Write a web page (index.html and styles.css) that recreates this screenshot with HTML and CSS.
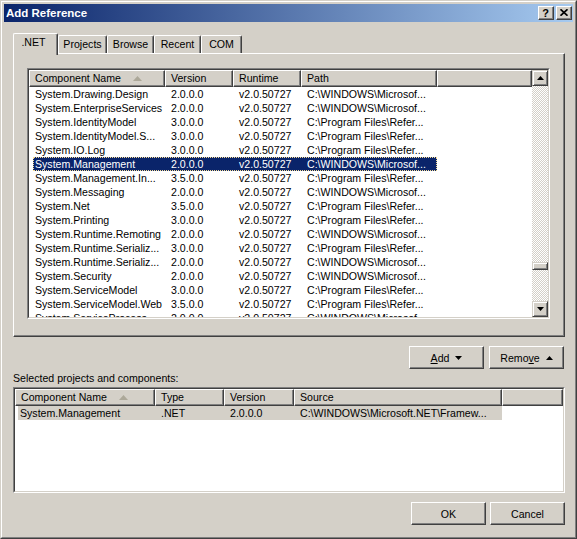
FILE: index.html
```html
<!DOCTYPE html>
<html lang="en">
<head>
    <meta charset="UTF-8">
    <meta name="viewport" content="width=device-width, initial-scale=1.0">
    <title>Add Reference</title>
    <link rel="stylesheet" href="styles.css">
</head>
<body>
    <div class="window">
        <div class="frame">
            <header class="titlebar">
                <span class="title">Add Reference</span>
                <div class="caption-buttons">
                    <button class="caption-btn help">?</button>
                    <button class="caption-btn close">
                        <svg width="8" height="7" viewBox="0 0 8 7">
                            <path d="M0.5 0.3 L7.5 6.7 M7.5 0.3 L0.5 6.7" stroke="#000" stroke-width="1.7"/>
                        </svg>
                    </button>
                </div>
            </header>

            <main class="dialog-body">
                <div class="tabs">
                    <div class="tab active tab-net">.NET</div>
                    <div class="tab tab-projects">Projects</div>
                    <div class="tab tab-browse">Browse</div>
                    <div class="tab tab-recent">Recent</div>
                    <div class="tab tab-com">COM</div>
                </div>

                <div class="tab-page">
                    <div class="listbox ref-list">
                        <div class="listbox-inner">
                            <div class="list-main">
                                <div class="list-header">
                                    <div class="hdr col-name">Component Name
                                        <svg class="sort-arrow" width="9" height="5" viewBox="0 0 9 5"><polygon points="4.5,0 9,5 0,5" fill="#aca899"/></svg>
                                    </div>
                                    <div class="hdr col-version">Version</div>
                                    <div class="hdr col-runtime">Runtime</div>
                                    <div class="hdr col-path">Path</div>
                                    <div class="hdr col-rest"></div>
                                </div>
                                <div class="list-rows" id="refRows"></div>
                            </div>
                            <div class="scrollbar">
                                <div class="scroll-btn">
                                    <svg width="7" height="4" viewBox="0 0 7 4"><polygon points="3.5,0 7,4 0,4" fill="#000"/></svg>
                                </div>
                                <div class="scroll-track">
                                    <div class="scroll-thumb"></div>
                                </div>
                                <div class="scroll-btn">
                                    <svg width="7" height="4" viewBox="0 0 7 4"><polygon points="0,0 7,0 3.5,4" fill="#000"/></svg>
                                </div>
                            </div>
                        </div>
                    </div>
                </div>

                <div class="action-row">
                    <button class="btn"><span><u>A</u>dd</span>
                        <svg class="btn-arrow" width="7" height="4" viewBox="0 0 7 4"><polygon points="0,0 7,0 3.5,4" fill="#000"/></svg>
                    </button>
                    <button class="btn"><span>Remo<u>v</u>e</span>
                        <svg class="btn-arrow" width="7" height="4" viewBox="0 0 7 4"><polygon points="3.5,0 7,4 0,4" fill="#000"/></svg>
                    </button>
                </div>

                <div class="selected-label">Selected projects and components:</div>

                <div class="listbox selected-list">
                    <div class="listbox-inner">
                        <div class="list-main">
                            <div class="list-header">
                                <div class="hdr sel-name">Component Name
                                    <svg class="sort-arrow" width="9" height="5" viewBox="0 0 9 5"><polygon points="4.5,0 9,5 0,5" fill="#aca899"/></svg>
                                </div>
                                <div class="hdr sel-type">Type</div>
                                <div class="hdr sel-version">Version</div>
                                <div class="hdr sel-source">Source</div>
                                <div class="hdr col-rest"></div>
                            </div>
                            <div class="list-rows">
                                <div class="sel-row">
                                    <div class="cell s1">System.Management</div>
                                    <div class="cell s2">.NET</div>
                                    <div class="cell s3">2.0.0.0</div>
                                    <div class="cell s4">C:\WINDOWS\Microsoft.NET\Framew...</div>
                                </div>
                            </div>
                        </div>
                    </div>
                </div>

                <div class="footer-row">
                    <button class="btn">OK</button>
                    <button class="btn">Cancel</button>
                </div>
            </main>
        </div>
    </div>

    <script>
        const WIN = 'C:\\WINDOWS\\Microsof...';
        const PF = 'C:\\Program Files\\Refer...';

        const references = [
            ['System.Drawing.Design', '2.0.0.0', WIN],
            ['System.EnterpriseServices', '2.0.0.0', WIN],
            ['System.IdentityModel', '3.0.0.0', PF],
            ['System.IdentityModel.S...', '3.0.0.0', PF],
            ['System.IO.Log', '3.0.0.0', PF],
            ['System.Management', '2.0.0.0', WIN],
            ['System.Management.In...', '3.5.0.0', PF],
            ['System.Messaging', '2.0.0.0', WIN],
            ['System.Net', '3.5.0.0', PF],
            ['System.Printing', '3.0.0.0', PF],
            ['System.Runtime.Remoting', '2.0.0.0', WIN],
            ['System.Runtime.Serializ...', '3.0.0.0', PF],
            ['System.Runtime.Serializ...', '2.0.0.0', WIN],
            ['System.Security', '2.0.0.0', WIN],
            ['System.ServiceModel', '3.0.0.0', PF],
            ['System.ServiceModel.Web', '3.5.0.0', PF],
            ['System.ServiceProcess', '2.0.0.0', WIN]
        ];

        // Fill the reference list
        const rows = document.getElementById('refRows');
        references.forEach((ref, i) => {
            const row = document.createElement('div');
            row.className = 'row' + (i === 5 ? ' selected' : '');
            [ref[0], ref[1], 'v2.0.50727', ref[2]].forEach((text, c) => {
                const cell = document.createElement('div');
                cell.className = 'cell c' + (c + 1);
                cell.textContent = text;
                row.appendChild(cell);
            });
            rows.appendChild(row);
        });
    </script>
</body>
</html>
```
FILE: styles.css
```css
* {
    margin: 0;
    padding: 0;
    box-sizing: border-box;
    font-family: "Liberation Sans", Arial, sans-serif;
}

body {
    background: #d4d0c8;
    font-size: 10.6px;
    color: #000;
}

button {
    font: inherit;
    color: inherit;
}

/* window frame */

.window {
    width: 577px;
    height: 539px;
    background: #d4d0c8;
    border: 1px solid;
    border-color: #d4d0c8 #404040 #404040 #d4d0c8;
}

.frame {
    height: 100%;
    border: 1px solid;
    border-color: #fff #808080 #808080 #fff;
    padding: 2px;
    display: flex;
    flex-direction: column;
}

.titlebar {
    height: 18px;
    flex-shrink: 0;
    display: flex;
    align-items: center;
    justify-content: space-between;
    padding: 0 1px 0 2px;
    background: linear-gradient(to right, #0a246a, #a6caf0);
}

.title {
    color: #fff;
    font-weight: bold;
    font-size: 11.5px;
}

.caption-buttons {
    display: flex;
    gap: 2px;
}

.caption-btn {
    width: 16px;
    height: 14px;
    background: #d4d0c8;
    border: 1px solid;
    border-color: #fff #404040 #404040 #fff;
    box-shadow: inset -1px -1px #808080;
    display: flex;
    align-items: center;
    justify-content: center;
    font-weight: bold;
    font-size: 11px;
    line-height: 12px;
    padding: 0 1px 1px 0;
}

/* body */

.dialog-body {
    flex: 1;
    display: flex;
    flex-direction: column;
    padding: 11px 8px 10px 9px;
}

.tabs {
    height: 20px;
    display: flex;
    align-items: flex-end;
}

.tab {
    height: 18px;
    line-height: 16px;
    text-align: center;
    background: #d4d0c8;
    border-top: 1px solid #fff;
    border-left: 1px solid #fff;
    border-right: 1px solid #404040;
    box-shadow: inset -1px 0 #808080;
    border-radius: 2px 2px 0 0;
}

.tab.active {
    height: 22px;
    margin-bottom: -2px;
    padding-bottom: 4px;
    position: relative;
    z-index: 1;
}

.tab-net { width: 45px; padding-right: 4px; }
.tab-projects { width: 49px; }
.tab-browse { width: 47px; }
.tab-recent { width: 47px; }
.tab-com { width: 41px; }

.tab-page {
    height: 284px;
    flex-shrink: 0;
    border: 1px solid;
    border-color: #fff #404040 #404040 #fff;
    box-shadow: inset -1px -1px #808080;
    padding: 14px 14px 17px 13px;
}

/* list views */

.listbox {
    background: #fff;
    border: 1px solid;
    border-color: #808080 #fff #fff #808080;
}

.listbox-inner {
    height: 100%;
    display: flex;
    border: 1px solid;
    border-color: #404040 #d4d0c8 #d4d0c8 #404040;
}

.ref-list {
    width: 523px;
    height: 251px;
}

.list-main {
    flex: 1;
    overflow: hidden;
}

.list-header {
    height: 17px;
    display: flex;
    background: #d4d0c8;
}

.hdr {
    height: 17px;
    line-height: 15px;
    padding-left: 5px;
    white-space: nowrap;
    border: 1px solid;
    border-color: #fff #404040 #404040 #fff;
    box-shadow: inset -1px -1px #808080;
}

.sort-arrow {
    margin-left: 9px;
    vertical-align: 1px;
}

.col-name { width: 136px; }
.col-version { width: 68px; }
.col-runtime { width: 68px; }
.col-path { width: 136px; }
.col-rest { flex: 1; }

.row,
.sel-row {
    display: flex;
    height: 14px;
    line-height: 14px;
    white-space: nowrap;
}

.row {
    width: 404px;
    margin-left: 4px;
}

.row.selected {
    background: #0a246a;
    color: #fff;
    outline: 1px dotted #f5db95;
    outline-offset: -1px;
}

.cell {
    overflow: hidden;
    padding-left: 6px;
}

.c1 { width: 132px; padding-left: 2px; }
.c2 { width: 68px; }
.c3 { width: 68px; }
.c4 { width: 136px; }

/* scrollbar */

.scrollbar {
    width: 16px;
    display: flex;
    flex-direction: column;
}

.scroll-btn,
.scroll-thumb {
    background: #d4d0c8;
    border: 1px solid;
    border-color: #d4d0c8 #404040 #404040 #d4d0c8;
    box-shadow: inset 1px 1px #fff, inset -1px -1px #808080;
}

.scroll-btn {
    height: 16px;
    display: flex;
    align-items: center;
    justify-content: center;
}

.scroll-track {
    flex: 1;
    padding-top: 176px;
    background-color: #fff;
    background-image: repeating-conic-gradient(#d4d0c8 0 25%, #fff 0 50%);
    background-size: 2px 2px;
}

.scroll-thumb {
    height: 8px;
}

/* buttons */

.action-row,
.footer-row {
    display: flex;
    justify-content: flex-end;
    margin-top: 9px;
}

.action-row {
    gap: 5px;
    margin-right: 1px;
}

.footer-row {
    gap: 4px;
}

.btn {
    width: 75px;
    height: 23px;
    background: #d4d0c8;
    border: 1px solid;
    border-color: #fff #404040 #404040 #fff;
    box-shadow: inset -1px -1px #808080;
    display: flex;
    align-items: center;
    justify-content: center;
}

.btn-arrow {
    margin-left: 6px;
}

.selected-label {
    height: 14px;
    line-height: 14px;
    margin: 2px 0 2px 0;
}

.selected-list {
    height: 106px;
    flex-shrink: 0;
}

.sel-name { width: 140px; }
.sel-type { width: 69px; }
.sel-version { width: 70px; }
.sel-source { width: 208px; }

.sel-row {
    width: 484px;
    margin-left: 3px;
    background: #d4d0c8;
}

.s1 { width: 137px; padding-left: 2px; }
.s2 { width: 69px; }
.s3 { width: 70px; }
.s4 { width: 208px; }
```
